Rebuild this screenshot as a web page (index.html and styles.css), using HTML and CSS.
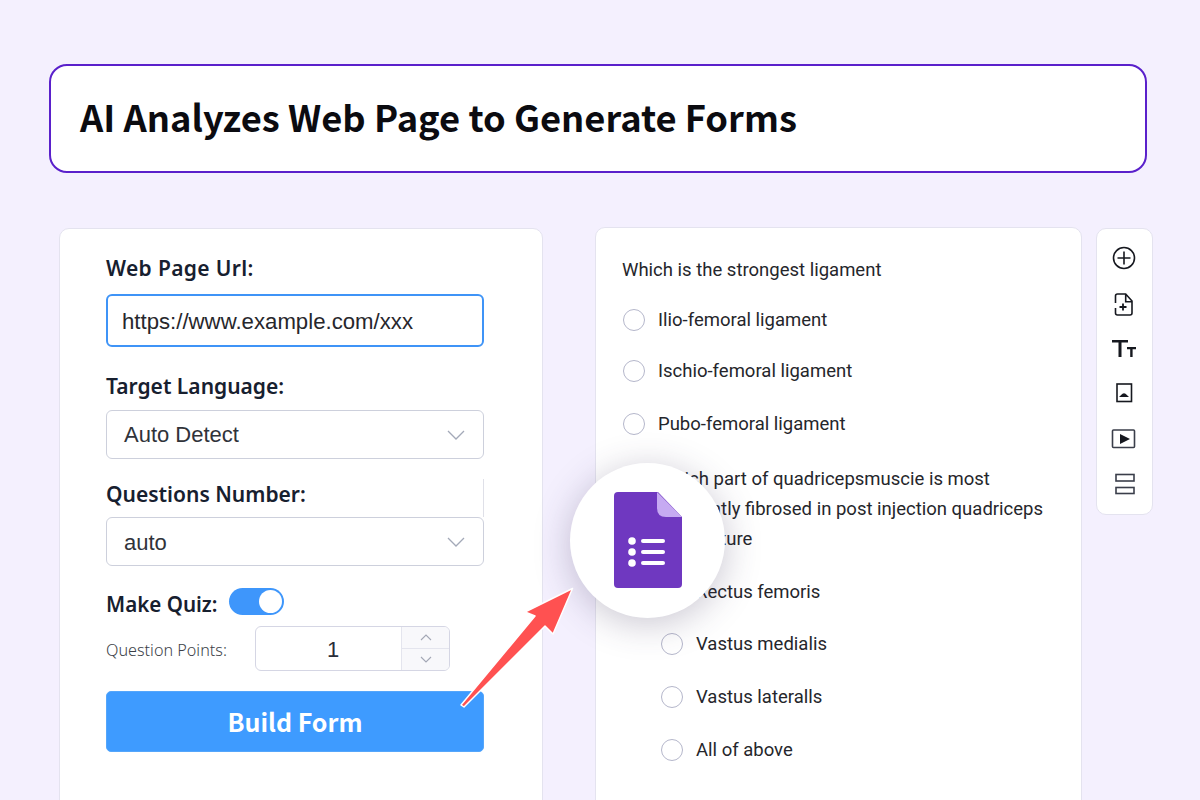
FILE: index.html
```html
<!DOCTYPE html>
<html lang="en">
<head>
<meta charset="utf-8">
<title>AI Analyzes Web Page to Generate Forms</title>
<link rel="stylesheet" href="styles.css">
</head>
<body>
<div class="page">
  <header class="title-box"><h1>AI Analyzes Web Page to Generate Forms</h1></header>
  <main class="workspace">
    <section class="form-card">
      <div class="label url-label">Web Page Url:</div>
      <div class="url-input">https://www.example.com/xxx</div>
      <div class="label lang-label">Target Language:</div>
      <div class="select"><span>Auto Detect</span><svg class="chev" viewBox="0 0 18 10"><path d="M1 1l8 8 8-8"/></svg></div>
      <div class="label num-label">Questions Number:</div>
      <div class="select"><span class="auto-text">auto</span><svg class="chev" viewBox="0 0 18 10"><path d="M1 1l8 8 8-8"/></svg></div>
      <div class="quiz-row"><span class="label quiz-label">Make Quiz:</span><span class="toggle"><span class="knob"></span></span></div>
      <div class="points-row">
        <span class="points-label">Question Points:</span>
        <div class="stepper">
          <span class="step-value">1</span>
          <div class="step-btns">
            <span class="step-btn"><svg viewBox="0 0 12 7"><path d="M1 6l5-5 5 5"/></svg></span>
            <span class="step-btn"><svg viewBox="0 0 12 7"><path d="M1 1l5 5 5-5"/></svg></span>
          </div>
        </div>
      </div>
      <button class="build">Build Form</button>
    </section>

    <section class="preview-card">
      <p class="question q1">Which is the strongest ligament</p>
      <div class="option o1"><span class="radio"></span>Ilio-femoral ligament</div>
      <div class="option o2"><span class="radio"></span>Ischio-femoral ligament</div>
      <div class="option o3"><span class="radio"></span>Pubo-femoral ligament</div>
      <p class="question q2">Which part of quadricepsmuscie is most<br>frequently fibrosed in post injection quadriceps<br>contracture</p>
      <div class="sub-options">
        <div class="option"><span class="radio"></span>Rectus femoris</div>
        <div class="option"><span class="radio"></span>Vastus medialis</div>
        <div class="option"><span class="radio"></span>Vastus lateralls</div>
        <div class="option"><span class="radio"></span>All of above</div>
      </div>
    </section>

    <aside class="toolbar">
      <span class="tool"><svg viewBox="0 0 55 45"><circle cx="27" cy="22" r="10.500" class="s"/><path class="s" d="M27 15.500v13M20.500 22h13"/></svg></span>
      <span class="tool"><svg viewBox="0 0 55 45"><path class="s" d="M18.500 22V15q0-2 2-2H28.700L35 20v12q0 2-2 2H20.500q-2 0-2-2v-5M28.700 13v7.700H35"/><path class="s2" d="M26 22.500v7M22.500 26h7"/></svg></span>
      <span class="tool"><svg viewBox="0 0 55 45"><path class="f" d="M15 14h16v2.600h-6.500V31h-3V16.600H15z"/><path class="f" d="M30 21h9v2.200h-3.400V31h-2.400v-7.800H30z"/></svg></span>
      <span class="tool"><svg viewBox="0 0 55 45"><rect x="20" y="13" width="14.500" height="17.500" class="s" stroke-width="1.800"/><path class="f" d="M22 26l3.500-3.200q1.500-1.300 3 0L32 26z"/></svg></span>
      <span class="tool"><svg viewBox="0 0 55 45"><rect x="15.500" y="14" width="22" height="17.500" rx="1" class="s3"/><path class="f" d="M23 18l10 5-10 5z"/></svg></span>
      <span class="tool"><svg viewBox="0 0 55 45"><rect x="19" y="13.500" width="18" height="6.500" class="s3"/><rect x="19" y="26.500" width="18" height="6" class="s3"/></svg></span>
    </aside>
  </main>
</div>

<div class="badge">
  <svg class="forms-icon" viewBox="0 0 68 96">
    <path fill="#6f38c0" d="M4 0H44L68 25V92Q68 96 64 96H4Q0 96 0 92V4Q0 0 4 0Z"/>
    <path fill="#c6aaf2" d="M43 0L68 25H52Q43 25 43 16Z"/>
    <g fill="#fff">
      <circle cx="18" cy="49" r="3.800"/><circle cx="18" cy="60" r="3.800"/><circle cx="18" cy="71" r="3.800"/>
      <rect x="27" y="47" width="24" height="4" rx="2"/><rect x="27" y="58" width="24" height="4" rx="2"/><rect x="27" y="69" width="24" height="4" rx="2"/>
    </g>
  </svg>
</div>
<svg class="arrow" viewBox="0 0 1200 800">
  <path d="M572.500 588.500L525 612 535 616 461 705 464 707 545 626 553 634Z" fill="#ff5151" stroke="#fff" stroke-width="1.500" stroke-linejoin="round"/>
</svg>
</body>
</html>
```
FILE: styles.css
```css
* { box-sizing: border-box; }
html, body { margin: 0; height: 100%; overflow: hidden; }
body { background: #f4f0fe; font-family: "Liberation Sans", Arial, sans-serif; position: relative; }
.page { padding: 64px 0 0 49px; height: 800px; overflow: hidden; }
.title-box {
  width: 1098px; height: 109px; background: #fff; border: 2px solid #5a20cb; border-radius: 18px;
  display: flex; align-items: center; padding-left: 29px;
}
h1 { margin: 0; font: 700 36.300px/1.2 "Noto Sans CJK JP", "Noto Sans", sans-serif; color: #0b0b10; position: relative; top: -2px; }
.workspace { display: flex; align-items: flex-start; margin-top: 54px; padding-left: 10px; height: 573px; overflow: hidden; }
.form-card {
  width: 484px; height: 620px; background: #fff; border: 1px solid #e4e3ef; border-radius: 10px;
  padding: 24px 58px 0 46px; margin-top: 1px; flex: none;
}
.label { font: 600 21px/30px "Noto Sans", sans-serif; color: #17202f; }
.url-label { letter-spacing: .35px; }
.url-input {
  height: 53px; margin-top: 11px; border: 2px solid #3f94f7; border-radius: 6px;
  font-size: 22.200px; line-height: 52px; padding-left: 14px; color: #27272c;
}
.lang-label { margin-top: 24px; }
.select {
  height: 49px; margin-top: 9px; border: 1px solid #cdd0dc; border-radius: 6px;
  font-size: 22px; display: flex; align-items: center; justify-content: space-between;
  padding: 0 18px 0 17px; color: #30333a;
}
.chev { width: 18px; height: 10px; fill: none; stroke: #a3a9b8; stroke-width: 1.300; }
.num-label { margin-top: 20px; border-right: 1px solid #dfe0e8; height: 38px; }
.num-label + .select { margin-top: 0; }
.auto-text { position: relative; top: 1px; }
.quiz-row { display: flex; align-items: center; gap: 11px; margin-top: 22px; height: 28px; }
.quiz-label { position: relative; top: 2px; font-size: 20.600px; }
.toggle { width: 55px; height: 27px; border-radius: 14px; background: #3e96fb; display: block; padding: 2px 2px 2px 30px; position: relative; top: -1px; }
.knob { display: block; width: 23px; height: 23px; border-radius: 50%; background: #fff; }
.points-row { display: flex; align-items: center; margin-top: 10px; }
.points-label { width: 149px; font: 300 16.200px/20px "Noto Sans", sans-serif; color: #3c3f48; position: relative; top: 1px; }
.stepper { width: 195px; height: 45px; border: 1px solid #d5d6e4; border-radius: 6px; display: flex; overflow: hidden; }
.step-value { flex: 1; text-align: center; font-size: 22px; line-height: 45px; color: #292d38; padding-left: 9px; }
.step-btns { width: 48px; border-left: 1px solid #e4e5ee; background: #f8f8fb; display: flex; flex-direction: column; }
.step-btn { flex: 1; display: flex; align-items: center; justify-content: center; }
.step-btn + .step-btn { border-top: 1px solid #e4e5ee; }
.step-btn svg { width: 12px; height: 7px; fill: none; stroke: #a4a8b6; stroke-width: 1.100; }
.build {
  display: block; width: 378px; height: 61px; margin-top: 20px; border: 1px solid #55a6fb; border-radius: 5px;
  background: #3e9bff; color: #fff; font: 700 25px/1 "Noto Sans CJK JP", "Noto Sans", sans-serif;
}
.preview-card {
  width: 487px; height: 620px; margin-left: 52px; background: #fff; border: 1px solid #e4e3ef; border-radius: 10px;
  padding: 30px 26px 0; flex: none; font-family: Roboto, sans-serif; font-size: 18.500px; color: #25262b;
}
.question { margin: 0; line-height: 24px; }
.option { display: flex; align-items: center; gap: 13px; height: 24px; }
.radio { width: 22px; height: 22px; margin-left: 1px; border: 1.500px solid #b5b7cb; border-radius: 50%; background: #fff; flex: none; }
.o1 { margin-top: 26px; }
.o2 { margin-top: 27px; }
.o3 { margin-top: 29px; }
.q2 { margin: 28px 0 0 36px; line-height: 30px; }
.sub-options { margin: 25.700px 0 0 38px; display: flex; flex-direction: column; gap: 28.700px; }
.toolbar {
  width: 57px; height: 287px; margin-left: 14px; margin-top: 1px; background: #fff;
  border: 1px solid #e4e3ef; border-radius: 10px; padding-top: 7px; flex: none;
  display: flex; flex-direction: column; align-items: center;
}
.tool { display: block; width: 55px; height: 45px; flex: none; }
.tool svg { display: block; width: 55px; height: 45px; }
.s { fill: none; stroke: #16181f; stroke-width: 1.600; }
.s2 { fill: none; stroke: #16181f; stroke-width: 1.800; }
.s3 { fill: none; stroke: #3a3e4a; stroke-width: 1.600; }
.f { fill: #16181f; }
.badge {
  position: absolute; left: 570px; top: 463px; width: 155px; height: 155px; border-radius: 50%; background: #fff;
  box-shadow: 0 6px 36px rgba(60, 50, 90, .28); display: flex; align-items: center; justify-content: center;
}
.forms-icon { width: 68px; height: 96px; position: relative; left: 0; top: -1px; }
.arrow { position: absolute; left: 0; top: 0; width: 1200px; height: 800px; pointer-events: none; }
```
